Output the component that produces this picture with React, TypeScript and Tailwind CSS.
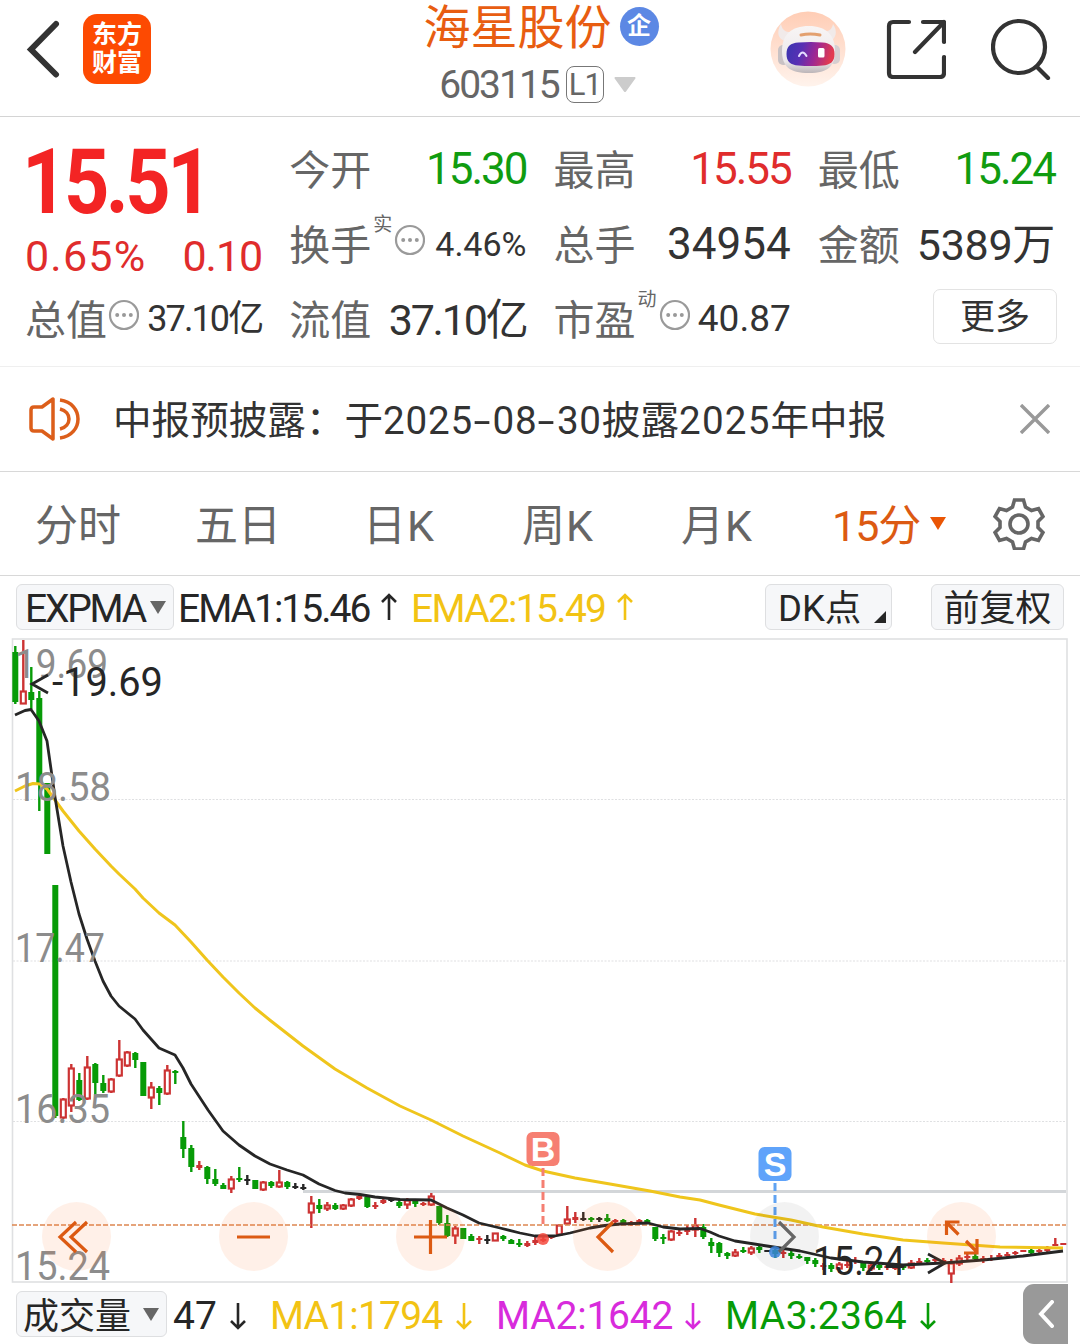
import React from 'react'

type Tone = 'up' | 'down' | 'flat'

// [tone, high, low, bodyTop, bodyBottom], one entry every 8px
type Candle = [Tone, number, number, number, number]

const CANDLES: Candle[] = [
  ['down', 646, 704, 652, 702], ['up', 640, 704, 691, 704], ['down', 667, 709, 692, 700], ['down', 691, 811, 698, 783],
  ['down', 783, 854, 783, 854], ['down', 885, 1118, 885, 1116], ['up', 1098, 1119, 1099, 1118], ['up', 1064, 1112, 1068, 1106],
  ['down', 1073, 1101, 1080, 1100], ['up', 1056, 1100, 1067, 1099], ['down', 1063, 1095, 1064, 1083], ['down', 1075, 1093, 1083, 1091],
  ['up', 1078, 1093, 1079, 1092], ['up', 1040, 1077, 1059, 1076], ['up', 1051, 1067, 1052, 1066], ['down', 1052, 1068, 1053, 1060],
  ['down', 1062, 1096, 1062, 1096], ['up', 1082, 1109, 1087, 1098], ['down', 1086, 1105, 1088, 1093], ['up', 1065, 1095, 1070, 1094],
  ['down', 1070, 1084, 1071, 1073], ['down', 1121, 1158, 1137, 1149], ['down', 1145, 1172, 1148, 1167], ['up', 1161, 1170, 1165, 1168],
  ['down', 1166, 1184, 1167, 1179], ['down', 1169, 1186, 1179, 1184], ['down', 1183, 1189, 1185, 1189], ['up', 1176, 1193, 1179, 1189],
  ['down', 1167, 1182, 1178, 1180], ['flat', 1175, 1185, 1179, 1181], ['down', 1180, 1189, 1180, 1189], ['up', 1181, 1191, 1182, 1190],
  ['down', 1181, 1188, 1182, 1186], ['up', 1170, 1188, 1182, 1187], ['down', 1181, 1189, 1182, 1187], ['flat', 1183, 1189, 1186, 1188],
  ['flat', 1184, 1190, 1187, 1188], ['up', 1196, 1228, 1203, 1213], ['down', 1199, 1213, 1205, 1209], ['up', 1202, 1211, 1205, 1209],
  ['down', 1203, 1210, 1205, 1209], ['up', 1204, 1210, 1205, 1209], ['up', 1198, 1207, 1199, 1206], ['up', 1195, 1200, 1196, 1199],
  ['down', 1197, 1208, 1197, 1207], ['up', 1202, 1209, 1205, 1206], ['up', 1199, 1204, 1200, 1203], ['flat', 1199, 1202, 1199, 1201],
  ['down', 1200, 1208, 1202, 1206], ['up', 1198, 1209, 1200, 1205], ['down', 1199, 1207, 1201, 1204], ['up', 1202, 1206, 1203, 1205],
  ['up', 1193, 1206, 1196, 1205], ['down', 1206, 1225, 1206, 1223], ['down', 1215, 1237, 1223, 1236], ['up', 1226, 1244, 1228, 1236],
  ['down', 1228, 1239, 1228, 1239], ['down', 1234, 1241, 1236, 1241], ['up', 1236, 1244, 1238, 1240], ['flat', 1235, 1244, 1239, 1240],
  ['up', 1233, 1241, 1233, 1241], ['down', 1235, 1241, 1236, 1239], ['down', 1239, 1244, 1240, 1244], ['down', 1239, 1247, 1243, 1245],
  ['up', 1241, 1247, 1243, 1246], ['up', 1236, 1245, 1240, 1243], ['up', 1237, 1242, 1239, 1241], ['up', 1235, 1239, 1236, 1238],
  ['up', 1224, 1236, 1225, 1235], ['up', 1206, 1225, 1219, 1224], ['up', 1212, 1223, 1217, 1220], ['flat', 1212, 1221, 1218, 1220],
  ['down', 1217, 1222, 1218, 1219], ['flat', 1217, 1222, 1218, 1219], ['down', 1214, 1222, 1218, 1221], ['up', 1219, 1223, 1220, 1222],
  ['down', 1219, 1224, 1220, 1223], ['up', 1221, 1226, 1222, 1224], ['up', 1219, 1223, 1220, 1222], ['down', 1219, 1224, 1220, 1223],
  ['down', 1227, 1241, 1227, 1239], ['down', 1234, 1244, 1237, 1239], ['up', 1230, 1241, 1231, 1240], ['up', 1230, 1236, 1232, 1234],
  ['up', 1225, 1235, 1229, 1232], ['up', 1218, 1237, 1225, 1230], ['down', 1224, 1239, 1227, 1237], ['down', 1238, 1253, 1242, 1246],
  ['down', 1242, 1257, 1243, 1253], ['down', 1252, 1259, 1253, 1256], ['up', 1249, 1257, 1252, 1256], ['down', 1247, 1253, 1250, 1252],
  ['up', 1246, 1255, 1248, 1253], ['down', 1245, 1253, 1247, 1250], ['flat', 1250, 1252, 1250, 1252], ['down', 1249, 1258, 1250, 1254],
  ['up', 1250, 1258, 1252, 1253], ['down', 1251, 1259, 1253, 1256], ['down', 1254, 1259, 1256, 1258], ['down', 1257, 1264, 1257, 1261],
  ['down', 1258, 1267, 1260, 1264], ['up', 1263, 1270, 1265, 1266], ['down', 1263, 1272, 1265, 1269], ['up', 1262, 1273, 1264, 1269],
  ['up', 1260, 1268, 1264, 1266], ['up', 1257, 1264, 1260, 1262], ['down', 1262, 1271, 1263, 1268], ['up', 1262, 1271, 1265, 1269],
  ['down', 1263, 1270, 1265, 1268], ['up', 1265, 1270, 1266, 1268], ['up', 1265, 1270, 1267, 1269], ['down', 1265, 1270, 1266, 1268],
  ['up', 1260, 1269, 1263, 1268], ['up', 1258, 1264, 1261, 1263], ['down', 1258, 1263, 1260, 1261], ['up', 1258, 1262, 1259, 1261],
  ['up', 1258, 1264, 1260, 1262], ['up', 1259, 1283, 1263, 1274], ['up', 1255, 1266, 1258, 1264], ['up', 1253, 1260, 1256, 1257],
  ['down', 1254, 1261, 1256, 1259], ['up', 1256, 1263, 1258, 1260], ['up', 1255, 1261, 1258, 1259], ['up', 1253, 1259, 1255, 1257],
  ['up', 1252, 1257, 1254, 1255], ['up', 1251, 1255, 1252, 1254], ['up', 1250, 1252, 1250, 1252], ['down', 1248, 1255, 1250, 1253],
  ['up', 1249, 1254, 1250, 1252], ['up', 1246, 1253, 1248, 1251], ['up', 1238, 1246, 1244, 1246], ['up', 1243, 1245, 1243, 1245],
]

const EMA1 =
  '15,715 25,710.5 31,709.5 39,721 47,741 55,797 63,846 71,882 79,914 87,939 95,961 103,981 111,996 119,1006 135,1019 143,1030 159,1048 175,1055 183,1068 191,1084 208,1110 223,1131 239,1145 255,1156 270,1164 287,1170 303,1175 319,1184 335,1190.5 345,1193 360,1194.5 375,1197 400,1199.5 431,1200 447,1208 463,1215 479,1223 500,1228 520,1233 535,1236 555,1236 570,1233 590,1228 605,1225.5 620,1224 648,1223 663,1227 680,1229 700,1228.5 710,1232 719,1236 735,1241 767,1246 800,1251 831,1258 863,1262 903,1265 943,1263 983,1260 1023,1256 1063,1251'

const EMA2 =
  '15,791 25,786 33,783.5 40,784 47,789 55,800 63,811 79,831 95,849 111,866 119,874 135,889 143,898 159,913 175,925 191,942 207,960 223,977 239,993 255,1008 271,1021 303,1046 335,1069 367,1088 400,1106 431,1120 463,1136 500,1153 525,1165 543,1171 575,1178 610,1184 650,1191 680,1197 700,1200 719,1205 755,1214 791,1220 823,1227 863,1234 903,1240 943,1243 1000,1247 1063,1248'

const AXIS_LABELS = [
  { text: '19.69', y: 678, width: 93 },
  { text: '18.58', y: 801, width: 96 },
  { text: '17.47', y: 962, width: 90 },
  { text: '16.35', y: 1123, width: 95 },
  { text: '15.24', y: 1280, width: 95 },
]

const getToneColor = (tone: Tone) => {
  switch (tone) {
    case 'up':
      return '#cc3333'
    case 'down':
      return '#079b07'
    default:
      return '#262626'
  }
}

const MoreDots = () => (
  <svg viewBox="0 0 32 32" className="h-8 w-8 shrink-0">
    <circle cx="17" cy="16" r="14" fill="none" stroke="#9a9a9a" strokeWidth="2.2" />
    <circle cx="10.2" cy="16" r="2" fill="#999" />
    <circle cx="17" cy="16" r="2" fill="#999" />
    <circle cx="23.8" cy="16" r="2" fill="#999" />
  </svg>
)

const Arrow: React.FC<{ up?: boolean; className?: string }> = ({ up = false, className = '' }) => (
  <svg
    viewBox="0 0 16 28"
    className={`h-7 w-4 shrink-0 ${className}`}
    fill="none"
    stroke="currentColor"
    strokeWidth="2.6"
  >
    <path d={up ? 'M8 27V2M1 9l7-7 7 7' : 'M8 1v25M1 19l7 7 7-7'} />
  </svg>
)

const Robot = () => (
  <svg viewBox="0 0 76 76" className="h-[76px] w-[76px]">
    <defs>
      <linearGradient id="halo" x1="0" y1="0" x2="0" y2="1">
        <stop offset="0" stopColor="#ffcdb5" />
        <stop offset="1" stopColor="#fff3ec" />
      </linearGradient>
      <linearGradient id="visor" x1="0" y1="0" x2="1" y2="0.15">
        <stop offset="0" stopColor="#3a35b0" />
        <stop offset="0.35" stopColor="#5730b4" />
        <stop offset="0.65" stopColor="#9c2794" />
        <stop offset="1" stopColor="#e23a50" />
      </linearGradient>
      <linearGradient id="shell" x1="0" y1="0" x2="0" y2="1">
        <stop offset="0" stopColor="#f8f5f5" />
        <stop offset="0.75" stopColor="#ece8ea" />
        <stop offset="1" stopColor="#bcb5b8" />
      </linearGradient>
    </defs>
    <circle cx="38" cy="38" r="37.5" fill="url(#halo)" />
    <path d="M11 13c-5 8-3 16 5 17l7-9c-7 1-11-2-12-8zM63 13c5 7 3 15-3 17l-8-9c6 0 10-2 11-8z" fill="#f1eae9" />
    <rect x="8" y="34" width="11" height="20" rx="5" fill="#c9c2c4" />
    <rect x="59" y="34" width="11" height="19" rx="5" fill="#d6cfd1" />
    <path d="M12 40c0-16 9-25 27-25 17 0 26 9 26 25 0 15-7 22-26 22-20 0-27-7-27-22z" fill="url(#shell)" />
    <path d="M31 24q9-2 19 0" fill="none" stroke="#e3a06f" strokeWidth="3" strokeLinecap="round" />
    <path d="M16.500 43c0-8 4-11 12-11.500q12.500-1 24 0c8 .5 12 4 12 11.500s-4 11-12 11.500q-12 1-24 0C20.500 54 16.500 51 16.500 43z" fill="url(#visor)" />
    <path d="M29 45q3.500-7 7.500 0" fill="none" stroke="#e5dcff" strokeWidth="2" strokeLinecap="round" />
    <rect x="48" y="37" width="6.500" height="9.500" rx="1.500" fill="#fff" />
  </svg>
)

const Header = () => (
  <header className="flex h-[117px] items-start border-b border-[#d4d4d4]">
    <div className="flex w-[300px] items-center pt-[14px] pl-[26px]">
      <svg viewBox="0 0 34 58" className="h-[58px] w-[34px]" fill="none" stroke="#333" strokeWidth="6">
        <path d="M30 4L5 29.500l25 25" strokeLinecap="round" />
      </svg>
      <div className="ml-[23px] flex h-[70px] w-[68px] flex-col items-center justify-center rounded-[14px] bg-[#fd4a02] text-[25px] leading-[28px] font-bold text-white">
        <span>东方</span>
        <span>财富</span>
      </div>
    </div>
    <div className="flex w-[470px] flex-col items-center">
      <div className="flex h-[52px] items-center pl-[12px]">
        <h1 className="mt-[3px] text-[47px] leading-[54px] text-[#e85d11]">海星股份</h1>
        <span className="ml-[8px] flex h-[39px] w-[39px] items-center justify-center rounded-full bg-[#5c88e4] text-[24px] leading-none font-bold text-white">
          企
        </span>
      </div>
      <div className="mt-[13px] flex h-[38px] items-center pl-[5px]">
        <span className="mt-[2px] text-[39px] leading-[38px] tracking-[-2px] text-[#666]">603115</span>
        <span className="ml-[7px] flex h-[37px] w-[38px] items-center justify-center rounded-[8px] border-[1.500px] border-[#777] text-[31px] leading-none tracking-[-1px] text-[#666]">
          L1
        </span>
        <svg viewBox="0 0 22 15" className="ml-[10px] h-[15px] w-[22px]" fill="#ccc">
          <path d="M1 0h20q1 1 0 2L12 14.500q-1 1-2 0L1 2Q0 1 1 0z" />
        </svg>
      </div>
    </div>
    <div className="flex items-center pt-[11px]">
      <Robot />
      <svg viewBox="0 0 60 60" className="ml-[40px] h-[60px] w-[60px]" fill="none" stroke="#333" strokeWidth="4.200" strokeLinecap="round" strokeLinejoin="round">
        <path d="M23 3H7Q3 3 3 7v47q0 4 4 4h47q4 0 4-4V38M37 3h21v20M58 3L29 33" />
      </svg>
      <svg viewBox="0 0 60 62" className="ml-[45px] h-[62px] w-[60px]" fill="none" stroke="#333" strokeWidth="4.200" strokeLinecap="round">
        <circle cx="28" cy="29" r="26" />
        <path d="M46 49l11 11" />
      </svg>
    </div>
  </header>
)

interface QuoteCellProps {
  label: string
  note?: string
  dots?: boolean
  value: string
  valueClass: string
}

const QuoteCell: React.FC<QuoteCellProps> = ({ label, note, dots = false, value, valueClass }) => (
  <div className="flex h-[75px] items-center">
    <span className="mt-[4px] text-[41px] leading-[60px] text-[#666]">{label}</span>
    {note && <span className="-mt-[38px] w-[22px] pl-[2px] text-[19px] leading-6 text-[#666]">{note}</span>}
    {dots && (
      <div className="-mt-[8px]">
        <MoreDots />
      </div>
    )}
    <span className={`ml-auto leading-[60px] whitespace-nowrap ${valueClass}`}>{value}</span>
  </div>
)

const Quote = () => (
  <section className="grid h-[250px] grid-cols-4 grid-rows-[75px_75px_75px] gap-x-[27px] border-b border-[#efefef] px-[25px] pt-[14px]">
    <div className="row-span-2 flex flex-col">
      <span className="mt-[9px] -ml-[3px] h-[80px] w-fit origin-left scale-x-[0.88] text-[90px] leading-[86px] font-bold tracking-[-4px] text-[#f32424]">
        15.51
      </span>
      <div className="mt-[8px] flex justify-between text-[43px] leading-[56px] text-[#e02c2c]">
        <span className="tracking-[1.200px]">0.65%</span>
        <span className="tracking-[-1px]">0.10</span>
      </div>
    </div>
    <QuoteCell label="今开" value="15.30" valueClass="text-[44px] tracking-[-2px] text-[#109c10]" />
    <QuoteCell label="最高" value="15.55" valueClass="text-[44px] tracking-[-2px] text-[#e02c2c]" />
    <QuoteCell label="最低" value="15.24" valueClass="text-[44px] tracking-[-2px] text-[#109c10]" />
    <QuoteCell label="换手" note="实" dots value="4.46%" valueClass="text-[34px] text-[#333]" />
    <QuoteCell label="总手" value="34954" valueClass="text-[44px] text-[#333]" />
    <QuoteCell label="金额" value="5389万" valueClass="text-[43px] mt-[2px] tracking-[-0.300px] text-[#333]" />
    <QuoteCell label="总值" dots value="37.10亿" valueClass="text-[36px] tracking-[-1.900px] text-[#333]" />
    <QuoteCell label="流值" value="37.10亿" valueClass="text-[43px] mt-[2px] tracking-[-2.200px] text-[#333]" />
    <QuoteCell label="市盈" note="动" dots value="40.87" valueClass="text-[37px] text-[#333]" />
    <div className="flex items-center justify-end">
      <button className="-mt-[5px] -mr-[2px] h-[55px] w-[124px] rounded-[7px] border-[1.500px] border-[#e3e3e3] pt-[2px] text-[35px] leading-none text-[#333]">
        更多
      </button>
    </div>
  </section>
)

const Dash = () => <span className="mx-[4px] inline-block scale-x-[1.600]">-</span>

const Notice = () => (
  <section className="flex h-[105px] items-center border-b border-[#d8d8d8] pl-[29px]">
    <svg viewBox="0 0 52 44" className="h-[44px] w-[52px]" fill="none" stroke="#dc5e1a" strokeWidth="3.500">
      <path d="M24 2v40l-11-8H5q-3 0-3-3V13q0-3 3-3h8z" strokeLinejoin="round" />
      <path d="M31 3c24 3 24 35 0 38M31 12c12 3 12 17 0 20" />
    </svg>
    <p className="mt-[3px] ml-[32px] w-[850px] text-[38.600px] leading-[56px] whitespace-nowrap text-[#333]">
      中报预披露：于
      <span className="tracking-[0.800px]">
        2025
        <Dash />
        08
        <Dash />
        30
      </span>
      披露<span className="tracking-[1.200px]">2025</span>年中报
    </p>
    <svg viewBox="0 0 30 30" className="ml-[57px] h-[30px] w-[30px]" fill="none" stroke="#999" strokeWidth="3.400">
      <path d="M1 1l28 28M29 1L1 29" />
    </svg>
  </section>
)

const Tabs = () => (
  <nav className="flex h-[104px] items-center border-b border-[#d8d8d8] text-[43px] leading-[60px] text-[#666]">
    <span className="mt-[5px] ml-[35px] w-[160px]">分时</span>
    <span className="mt-[5px] w-[168px]">五日</span>
    <span className="mt-[5px] w-[159px] tracking-[1px]">日K</span>
    <span className="mt-[5px] w-[159px] tracking-[1px]">周K</span>
    <span className="mt-[5px] w-[151px] tracking-[1px]">月K</span>
    <span className="mt-[5px] w-[98px] tracking-[-1px] whitespace-nowrap text-[#dc5a12]">15分</span>
    <svg viewBox="0 0 16 14" className="h-[14px] w-4" fill="#ea5504">
      <path d="M0 0h16L8 13z" />
    </svg>
    <svg viewBox="0 0 52 52" className="ml-[47px] h-[52px] w-[52px]" fill="none" stroke="#666" strokeWidth="3.600" strokeLinejoin="miter">
      <path d="M21.500 2h9l2 7 6 3.500 7-2 4.500 8-5 5v6l5 5-4.500 8-7-2-6 3.500-2 7h-9l-2-7-6-3.500-7 2-4.500-8 5-5v-6l-5-5 4.500-8 7 2 6-3.500z" />
      <circle cx="26" cy="26" r="9" />
    </svg>
  </nav>
)

const IndicatorBar = () => (
  <section className="flex h-[62px] items-center pl-4 text-[39px] leading-[46px] text-[#262626]">
    <button className="flex h-[46px] w-[158px] items-center rounded-[6px] border border-[#dedfe1] bg-[#f6f7f9] pl-[8px]">
      <span className="mt-[3px] w-[125px] text-left tracking-[-2.200px]">EXPMA</span>
      <svg viewBox="0 0 16 13" className="h-[13px] w-4 shrink-0" fill="#666">
        <path d="M0 0h16L8 13z" />
      </svg>
    </button>
    <span className="mt-[3px] ml-[4px] w-[203px] tracking-[-2px]">EMA1:15.46</span>
    <Arrow up />
    <span className="mt-[3px] ml-[14px] w-[206px] tracking-[-1.700px] text-[#f2c314]">EMA2:15.49</span>
    <Arrow up className="text-[#f2c314]" />
    <button className="ml-[132px] flex h-[46px] w-[127px] items-center rounded-[6px] border border-[#dedfe1] bg-[#f6f7f9] pl-[12px]">
      <span className="mt-[3px] w-[96px] text-left text-[36.500px]">DK点</span>
      <svg viewBox="0 0 12 12" className="mt-[19px] h-3 w-3" fill="#262626">
        <path d="M12 0v12H0z" />
      </svg>
    </button>
    <button className="ml-[39px] h-[46px] w-[133px] rounded-[6px] border border-[#dedfe1] bg-[#f6f7f9] pt-[3px] text-[36px] leading-[42px]">
      前复权
    </button>
  </section>
)

const Candlesticks = () => (
  <g>
    {CANDLES.map(([tone, high, low, top, bottom], i) => {
      const x = 15.3 + i * 8
      const color = getToneColor(tone)
      const hollow = tone === 'up' && bottom - top > 3
      return (
        <g key={x}>
          <rect x={x - 1.2} y={high} width={2.4} height={low - high} fill={color} />
          <rect
            x={hollow ? x - 2.5 : x - 3}
            y={hollow ? top + 0.5 : top}
            width={hollow ? 5 : 6}
            height={Math.max(hollow ? bottom - top - 1 : bottom - top, 2)}
            fill={hollow ? '#fff' : color}
            stroke={hollow ? color : 'none'}
            strokeWidth={2.2}
          />
        </g>
      )
    })}
  </g>
)

const PriceChart = () => (
  <svg viewBox="0 638 1080 646" className="block h-[646px] w-[1080px]" fontFamily="Roboto, 'Noto Sans', sans-serif">
    <g fill="none" stroke="#dfe0e2" strokeWidth="2">
      <rect x="12.500" y="639" width="1054.500" height="643" strokeWidth="1.600" />
      <path d="M13 799.500H1066M13 961H1066M13 1121.500H1066" strokeWidth="1.200" strokeDasharray="2 1.500" />
    </g>
    <path d="M303 1191.500H1066" stroke="#d3d6d9" strokeWidth="3" />
    <Candlesticks />
    <path d="M12 1225H1066" stroke="#dd8650" strokeWidth="1.600" strokeDasharray="5 2" />
    <polyline points={EMA2} fill="none" stroke="#efc51c" strokeWidth="3" strokeLinejoin="round" />
    <polyline points={EMA1} fill="none" stroke="#262626" strokeWidth="2.800" strokeLinejoin="round" />
    <g fontSize="40" fill="#8c8c8c">
      {AXIS_LABELS.map(({ text, y, width }) => (
        <text key={text} x="15" y={y} textLength={width} lengthAdjust="spacingAndGlyphs">
          {text}
        </text>
      ))}
    </g>
    <g fontSize="40" fill="#262626">
      <text x="52" y="696" textLength="111" lengthAdjust="spacingAndGlyphs">-19.69</text>
      <path d="M48 675L32 684l16 9" fill="none" stroke="#262626" strokeWidth="2.800" />
      <text x="813" y="1275" textLength="92" lengthAdjust="spacingAndGlyphs">15.24</text>
      <path d="M928 1254l17 9-17 10" fill="none" stroke="#262626" strokeWidth="2.800" />
    </g>
    <path d="M543 1168v56" stroke="#f57f72" strokeWidth="3" strokeDasharray="8 4" />
    <circle cx="543" cy="1239" r="6" fill="#f4493d" fillOpacity="0.85" />
    <rect x="526.500" y="1132" width="33" height="34" rx="6" fill="#f67f72" />
    <path d="M775 1183v56" stroke="#60a3f2" strokeWidth="3" strokeDasharray="8 4" />
    <circle cx="775" cy="1252" r="6" fill="#3d8be8" fillOpacity="0.85" />
    <rect x="758.500" y="1147" width="33" height="34" rx="6" fill="#5fa3fa" />
    <g fontSize="34" fontWeight="700" fill="#fff" textAnchor="middle" fontFamily="'Liberation Sans', Arial, sans-serif">
      <text x="543" y="1161">B</text>
      <text x="775" y="1176">S</text>
    </g>
  </svg>
)

const TOOLS = [
  { name: 'first', path: 'M34 20L18 35l16 15M45 20L29 35l16 15', muted: false },
  { name: 'zoom-out', path: 'M18 35h33', muted: false },
  { name: 'zoom-in', path: 'M18 35h33M34.500 18v34', muted: false },
  { name: 'prev', path: 'M40 20L25 35l15 15', muted: false },
  { name: 'next', path: 'M29 20l15 15-15 15', muted: true },
  { name: 'expand', path: 'M19.500 33V20h13M20 21l11.500 11.500M50 37v14H37M50 50L39 39', muted: false },
]

const ChartTools = () => (
  <div className="absolute top-[564px] left-[42px] flex gap-[108px]">
    {TOOLS.map(({ name, path, muted }) => (
      <button
        key={name}
        aria-label={name}
        className={`h-[69px] w-[69px] rounded-full ${muted ? 'bg-black/5' : 'bg-[#ff6a1a]/10'}`}
      >
        <svg viewBox="0 0 69 69" fill="none" stroke={muted ? '#666' : '#dc5a12'} strokeWidth="3.200">
          <path d={path} />
        </svg>
      </button>
    ))}
  </div>
)

const VolumeBar = () => (
  <section className="flex h-[60px] items-start pl-4 text-[39px] leading-[46px] text-[#262626]">
    <button className="mt-[7px] flex h-[46px] w-[151px] shrink-0 items-center rounded-[6px] border border-[#dedfe1] bg-[#f6f7f9] pl-[6px]">
      <span className="mt-[5px] w-[120px] text-left text-[36px] leading-[42px]">成交量</span>
      <svg viewBox="0 0 16 13" className="h-[13px] w-4 shrink-0" fill="#666">
        <path d="M0 0h16L8 13z" />
      </svg>
    </button>
    <div className="mt-[9px] flex w-[856px] shrink-0 items-center">
      <span className="ml-[6px] w-[57px]">47</span>
      <Arrow />
      <span className="ml-[24px] w-[186px] tracking-[-0.800px] text-[#f2c314]">MA1:1794</span>
      <Arrow className="text-[#f2c314]" />
      <span className="ml-[24px] w-[189px] tracking-[-0.200px] text-[#d82bdc]">MA2:1642</span>
      <Arrow className="text-[#d82bdc]" />
      <span className="ml-[24px] w-[195px] tracking-[0.400px] text-[#079b07]">MA3:2364</span>
      <Arrow className="text-[#079b07]" />
    </div>
    <button className="flex h-[60px] w-[45px] shrink-0 items-center justify-center rounded-l-[11px] bg-[#999]">
      <svg viewBox="0 0 16 28" className="h-7 w-4" fill="none" stroke="#fff" strokeWidth="4" strokeLinecap="round">
        <path d="M14 2L3 14l11 12" />
      </svg>
    </button>
  </section>
)

export default function App() {
  return (
    <main className="h-[1344px] w-[1080px] overflow-hidden bg-white font-['Roboto','Noto_Sans_CJK_SC',sans-serif]">
      <Header />
      <Quote />
      <Notice />
      <Tabs />
      <IndicatorBar />
      <div className="relative">
        <PriceChart />
        <ChartTools />
      </div>
      <VolumeBar />
    </main>
  )
}
